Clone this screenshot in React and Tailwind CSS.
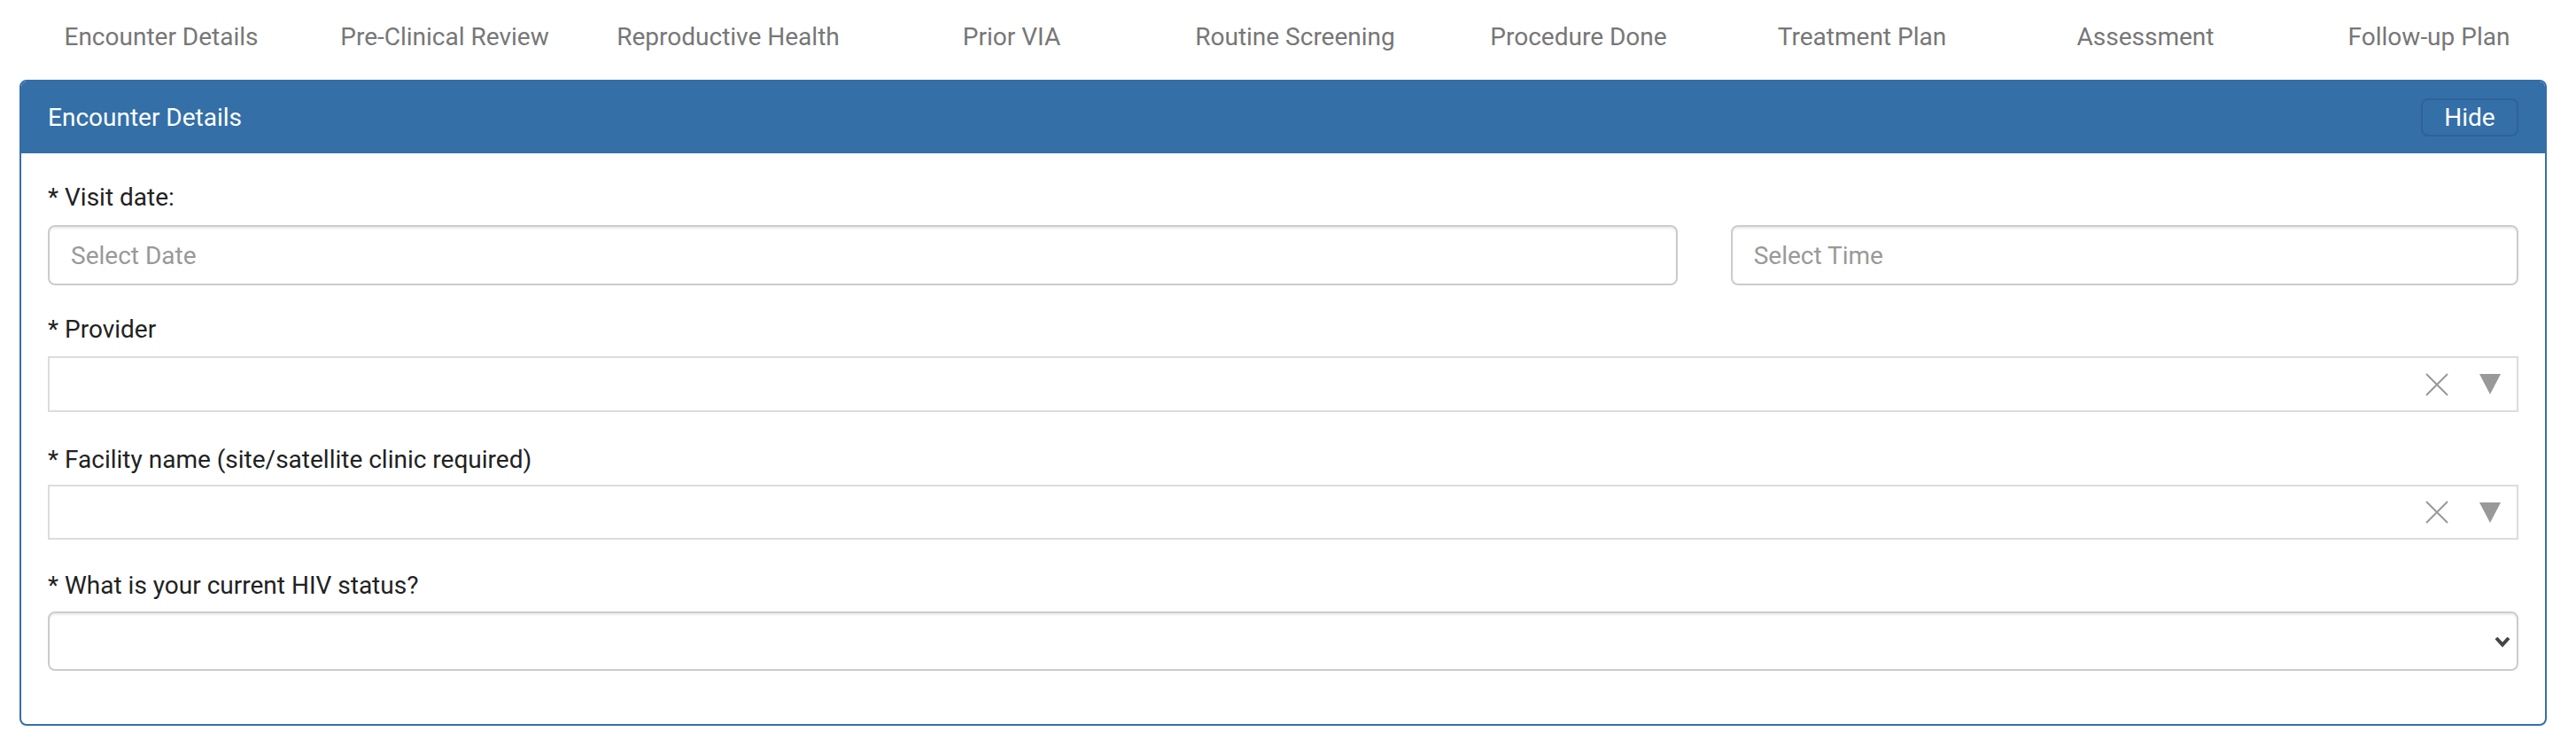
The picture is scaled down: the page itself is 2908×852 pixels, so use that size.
import React from 'react';

const tabs = [
  'Encounter Details',
  'Pre-Clinical Review',
  'Reproductive Health',
  'Prior VIA',
  'Routine Screening',
  'Procedure Done',
  'Treatment Plan',
  'Assessment',
  'Follow-up Plan',
];

const Label = ({ children, className = '' }) => (
  <label className={`block h-[40px] leading-[40px] text-[28px] text-[#222] ${className}`}>{children}</label>
);

// react-select style box with clear + arrow
const SelectBox = ({ className = '' }) => (
  <div className={`flex items-center justify-end border-2 border-[#dcdcdc] bg-white pr-[18px] ${className}`}>
    <svg width="26" height="26" viewBox="0 0 26 26" className="mr-[35px]">
      <path d="M1 1 L25 25 M25 1 L1 25" stroke="#999" strokeWidth="2" fill="none" />
    </svg>
    <svg width="24" height="23" viewBox="0 0 24 23">
      <polygon points="0,0 24,0 12,23" fill="#999" />
    </svg>
  </div>
);

export default function App() {
  return (
    <div className="w-[2908px] bg-white font-['Roboto',sans-serif]">
      {/* Section tabs */}
      <div className="ml-[22px] grid w-[2880px] grid-cols-9 pt-[22px] pb-[28px]">
        {tabs.map((t) => (
          <div key={t} className="h-[40px] text-center text-[28px] leading-[40px] text-[#777]">
            {t}
          </div>
        ))}
      </div>

      {/* Panel */}
      <div className="ml-[22px] w-[2853px] overflow-hidden rounded-[8px] border-2 border-[#346fa8]">
        <div className="flex h-[81px] items-center justify-between bg-[#346fa8] px-[30px]">
          <span className="text-[28px] leading-[40px] text-white">Encounter Details</span>
          <button className="flex h-[43px] w-[110px] items-center justify-center rounded-[8px] border-2 border-[#2f6396] bg-[#346fa8] text-[28px] text-white">
            Hide
          </button>
        </div>

        <div className="px-[30px] pt-[30px] pb-[60px]">
          <Label className="mb-[11px]">* Visit date:</Label>
          <div className="grid grid-cols-[1839fr_889fr] gap-x-[60px]">
            <input
              placeholder="Select Date"
              className="h-[68px] rounded-[8px] border-2 border-[#ccc] px-[24px] text-[28px] text-[#555] shadow-[inset_0_2px_2px_rgba(0,0,0,0.075)] outline-none placeholder:text-[#999]"
            />
            <input
              placeholder="Select Time"
              className="h-[68px] rounded-[8px] border-2 border-[#ccc] px-[24px] text-[28px] text-[#555] shadow-[inset_0_2px_2px_rgba(0,0,0,0.075)] outline-none placeholder:text-[#999]"
            />
          </div>

          <Label className="mt-[30px] mb-[10px]">* Provider</Label>
          <SelectBox className="h-[63px]" />

          <Label className="mt-[34px] mb-[8px]">* Facility name (site/satellite clinic required)</Label>
          <SelectBox className="h-[62px]" />

          <Label className="mt-[32px] mb-[9px]">* What is your current HIV status?</Label>
          <div className="relative">
            <select className="h-[67px] w-full appearance-none rounded-[8px] border-2 border-[#ccc] bg-white px-[24px] text-[28px] shadow-[inset_0_2px_2px_rgba(0,0,0,0.075)] outline-none">
              <option value=""></option>
            </select>
            <svg
              width="18"
              height="13"
              viewBox="0 0 18 13"
              className="pointer-events-none absolute top-[28px] right-[9px]"
            >
              <path d="M2 2 L9 9.5 L16 2" stroke="#444" strokeWidth="4" fill="none" />
            </svg>
          </div>
        </div>
      </div>
    </div>
  );
}
